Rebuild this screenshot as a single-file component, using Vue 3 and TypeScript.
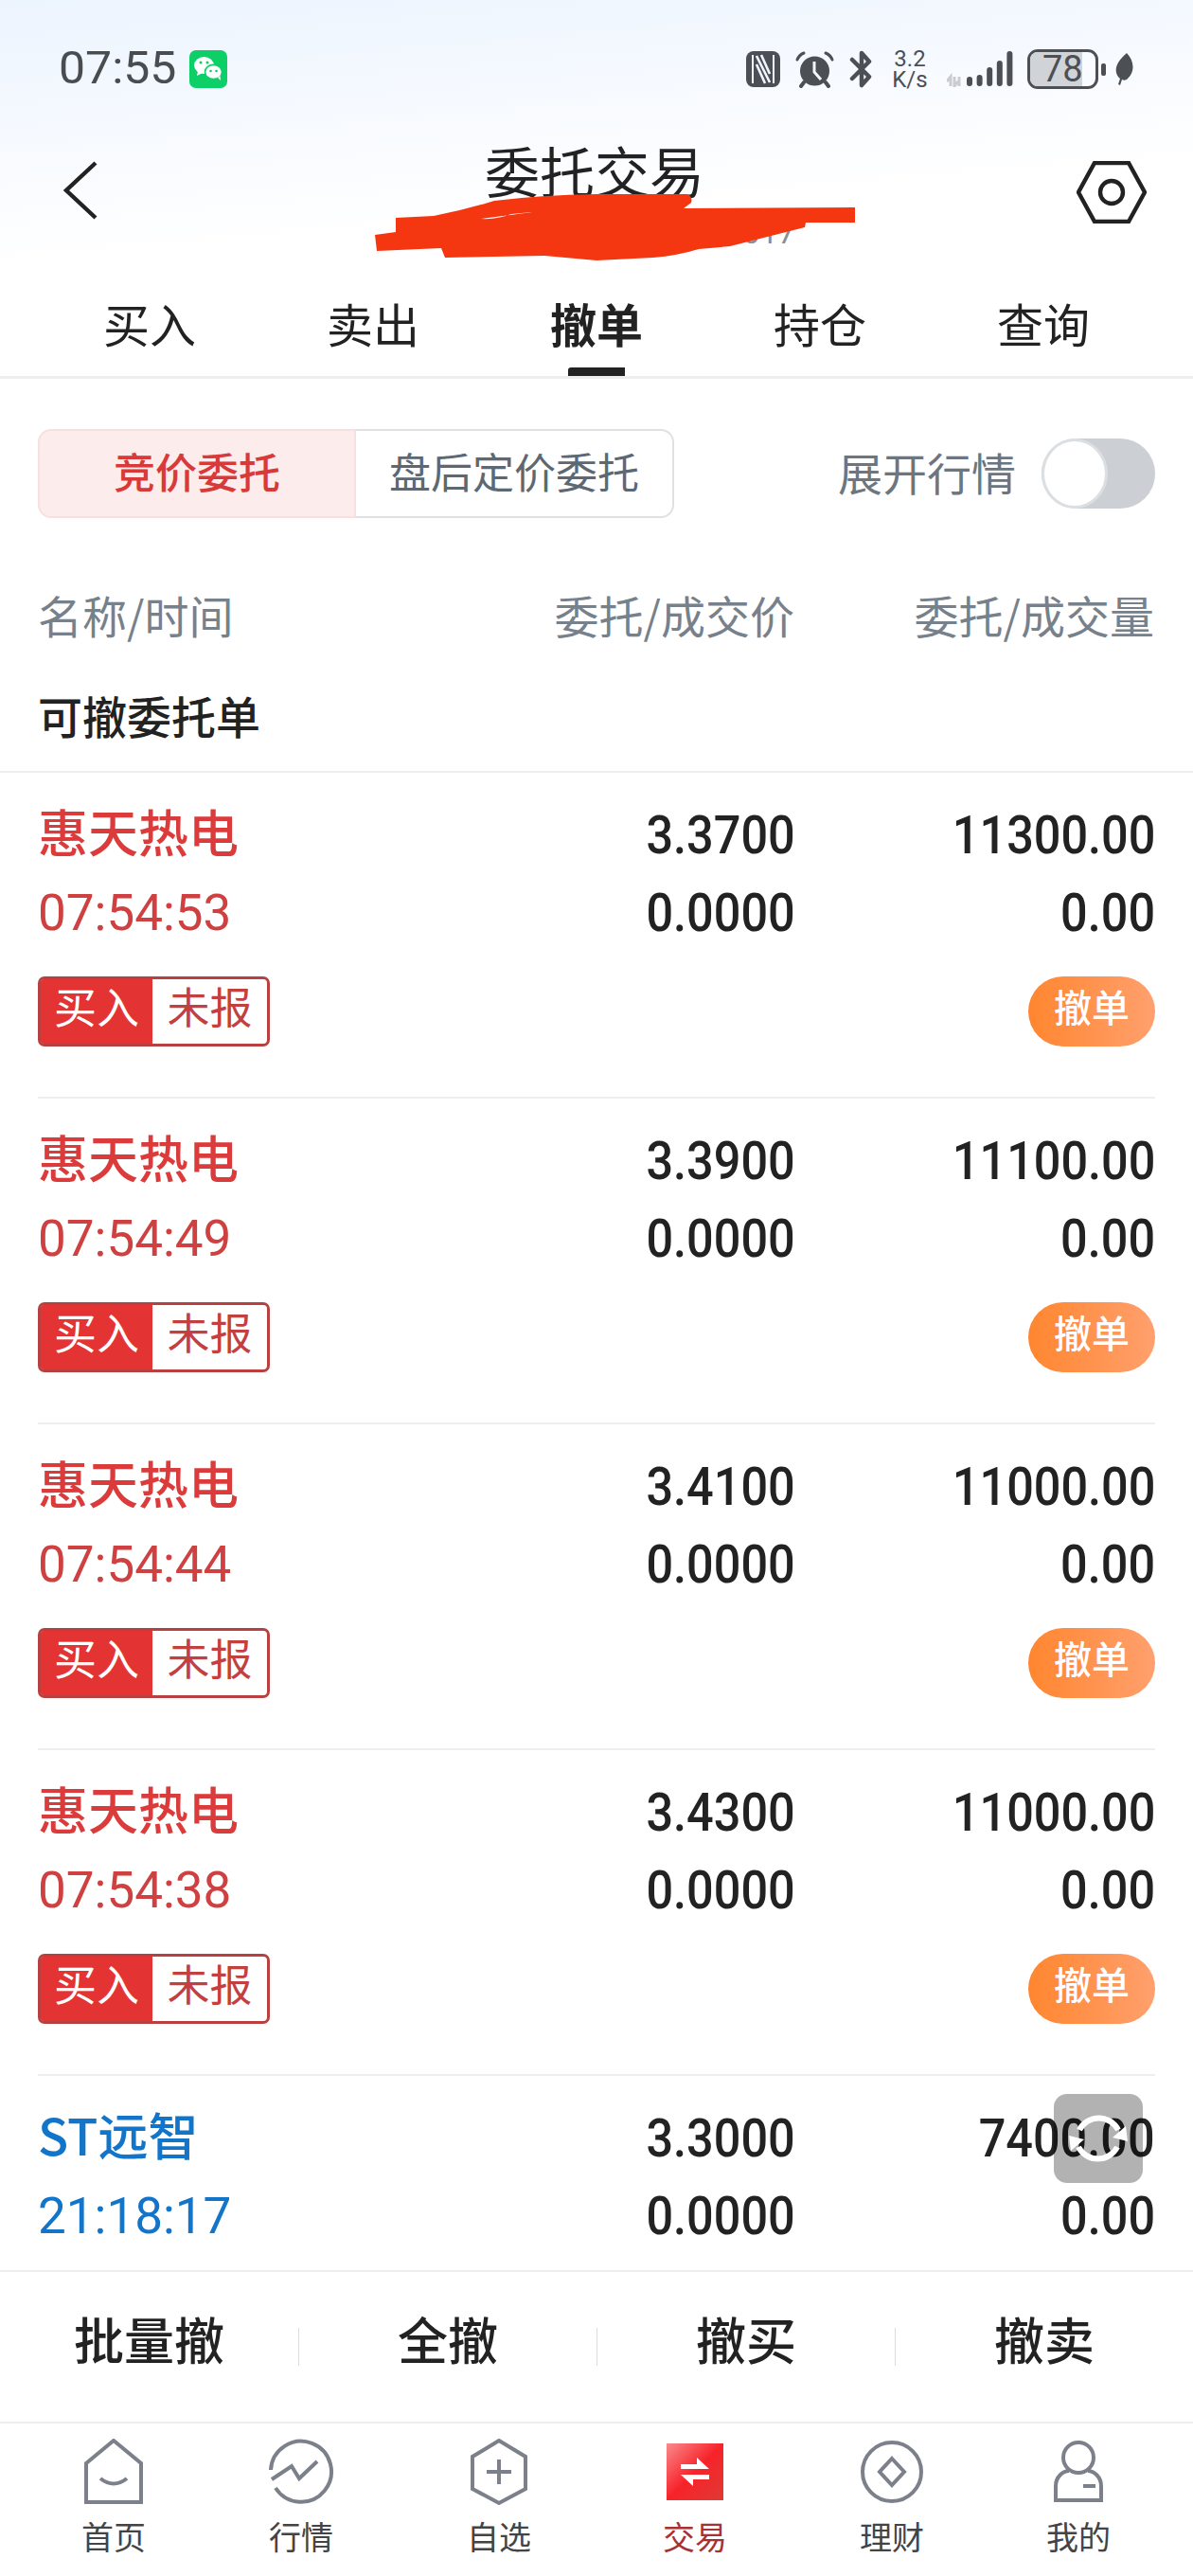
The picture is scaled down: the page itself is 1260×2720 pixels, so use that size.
<script setup lang="ts">
interface Order {
  name: string
  time: string
  price: string
  qty: string
  color: 'red' | 'blue'
  tail: boolean
}

const topTabs = ['买入', '卖出', '撤单', '持仓', '查询']
const actions = ['批量撤', '全撤', '撤买', '撤卖']

const orders: Order[] = [
  { name: '惠天热电', time: '07:54:53', price: '3.3700', qty: '11300.00', color: 'red', tail: true },
  { name: '惠天热电', time: '07:54:49', price: '3.3900', qty: '11100.00', color: 'red', tail: true },
  { name: '惠天热电', time: '07:54:44', price: '3.4100', qty: '11000.00', color: 'red', tail: true },
  { name: '惠天热电', time: '07:54:38', price: '3.4300', qty: '11000.00', color: 'red', tail: true },
  { name: 'ST远智', time: '21:18:17', price: '3.3000', qty: '7400.00', color: 'blue', tail: false },
]

const signal = [10, 12, 20, 27, 37]
</script>

<template>
  <div class="phone">
    <div class="head">
      <div class="status">
        <span class="clock">07:55</span>
        <svg class="wechat" width="40" height="40" viewBox="0 0 40 40">
          <rect width="40" height="40" rx="7" fill="#0ccf68" />
          <ellipse cx="15.5" cy="16" rx="10.5" ry="9" fill="#fff" />
          <path d="M9 22l-1 5 6-3z" fill="#fff" />
          <ellipse cx="25.5" cy="23" rx="9" ry="7.6" fill="#fff" stroke="#0ccf68" stroke-width="1.6" />
          <path d="M30 29l3 3-.5-5z" fill="#fff" />
          <circle cx="12" cy="13" r="1.5" fill="#0ccf68" />
          <circle cx="19" cy="13" r="1.5" fill="#0ccf68" />
          <circle cx="22.5" cy="22" r="1.3" fill="#0ccf68" />
          <circle cx="28.5" cy="22" r="1.3" fill="#0ccf68" />
        </svg>
        <div class="sys">
          <svg width="36" height="38" viewBox="0 0 36 38">
            <rect width="36" height="38" rx="8" fill="#4c4f53" />
            <path d="M7 4v30M29 4v30" stroke="#eef5fe" stroke-width="2" />
            <path d="M11 5l14 28M11 14l9 20M25 24l-9-20" stroke="#eef5fe" stroke-width="2.6" fill="none" />
          </svg>
          <svg width="41" height="39" viewBox="0 0 41 39">
            <circle cx="20.5" cy="21" r="15.5" fill="#4c4f53" />
            <path d="M20 11v11l7 8" stroke="#f2f7fe" stroke-width="3" fill="none" />
            <path d="M2 9q2-5 7-7M39 9q-2-5-7-7" stroke="#4c4f53" stroke-width="3" fill="none" stroke-linecap="round" />
            <path d="M9 33l-3 4M32 33l3 4" stroke="#4c4f53" stroke-width="4" stroke-linecap="round" />
          </svg>
          <svg width="24" height="40" viewBox="0 0 24 40">
            <path d="M3 10l18 18-8 9V3l8 9L3 30" fill="none" stroke="#4c4f53" stroke-width="4.5" stroke-linejoin="round" stroke-linecap="round" />
          </svg>
          <div class="speed"><span>3.2</span><span>K/s</span></div>
          <svg class="bars" width="70" height="38" viewBox="0 0 70 38">
            <path d="M4 37V27l-4 5M8 27v10l4-5M13 37V27" stroke="#c9ccd1" stroke-width="3" fill="none" />
            <rect
              v-for="(h, i) in signal"
              :key="i"
              :x="21 + i * 10.6"
              :y="37 - h"
              width="6"
              :height="h"
              rx="3"
              fill="#4c4f53"
            />
          </svg>
          <div class="battery">
            <div class="level"></div>
            <span>78</span>
          </div>
          <div class="nub"></div>
          <svg class="leaf" width="21" height="34" viewBox="0 0 21 34">
            <path d="M14 0c8 8 9 20 1 27-2 2-4 2-6 1l-2 6-2-1 2-6C0 21 1 11 14 0z" fill="#4c4f53" />
          </svg>
        </div>
      </div>

      <div class="nav">
        <svg class="back" width="36" height="62" viewBox="0 0 36 62">
          <path d="M34 2L3 31l31 29" fill="none" stroke="#222" stroke-width="4.4" />
        </svg>
        <div class="titles">
          <div class="title">委托交易</div>
          <div class="sub">017</div>
        </div>
        <svg class="gear" width="74" height="66" viewBox="0 0 74 66">
          <path d="M19 2h36l17 31-17 31H19L2 33z" fill="none" stroke="#222" stroke-width="4.4" />
          <circle cx="37" cy="33" r="12" fill="none" stroke="#222" stroke-width="4.4" />
        </svg>
      </div>

      <div class="tabs">
        <div v-for="t in topTabs" :key="t" class="tab" :class="{ on: t === '撤单' }">{{ t }}</div>
      </div>
    </div>

    <div class="controls">
      <div class="seg">
        <div class="seg-item active">竞价委托</div>
        <div class="seg-item">盘后定价委托</div>
      </div>
      <div class="expand">
        <span>展开行情</span>
        <div class="switch"><div class="knob"></div></div>
      </div>
    </div>

    <div class="cols">
      <span>名称/时间</span>
      <span class="r">委托/成交价</span>
      <span class="r">委托/成交量</span>
    </div>
    <div class="section">可撤委托单</div>

    <div class="list">
      <div v-for="(o, i) in orders" :key="i" class="row">
        <div class="grid" :class="o.color">
          <div class="name">{{ o.name }}</div>
          <div class="val r"><span class="num">{{ o.price }}</span></div>
          <div class="val r"><span class="num">{{ o.qty }}</span></div>
          <div class="time"><span class="num left">{{ o.time }}</span></div>
          <div class="val r"><span class="num">0.0000</span></div>
          <div class="val r"><span class="num">0.00</span></div>
        </div>
        <div v-if="o.tail" class="tail">
          <div class="tag"><span class="tag-a">买入</span><span class="tag-b">未报</span></div>
          <div class="cancel">撤单</div>
        </div>
      </div>
    </div>

    <div class="actions">
      <div v-for="a in actions" :key="a" class="action"><span>{{ a }}</span></div>
    </div>

    <div class="bottom">
      <div class="item">
        <svg width="66" height="70" viewBox="0 0 66 70">
          <path d="M4 26L33 2l29 24v41H4z" fill="none" stroke="#7c808a" stroke-width="4" />
          <path d="M19 42q14 11 28 0" fill="none" stroke="#7c808a" stroke-width="4" />
        </svg>
        <span>首页</span>
      </div>
      <div class="item">
        <svg width="70" height="70" viewBox="0 0 70 70">
          <path d="M3 33A32 32 0 1 1 8 52" fill="none" stroke="#7c808a" stroke-width="4" />
          <path d="M4 43l21-14 8 13 19-18" fill="none" stroke="#7c808a" stroke-width="4" />
        </svg>
        <span>行情</span>
      </div>
      <div class="item">
        <svg width="66" height="70" viewBox="0 0 66 70">
          <path d="M33 2l28 17v34L33 68 5 53V19z" fill="none" stroke="#7c808a" stroke-width="4" />
          <path d="M20 35h26M33 22v26" stroke="#7c808a" stroke-width="4" />
        </svg>
        <span>自选</span>
      </div>
      <div class="item trade">
        <svg width="66" height="70" viewBox="0 0 66 70">
          <defs>
            <linearGradient id="tradeFill" x1="0" y1="0" x2="1" y2="1">
              <stop offset="0" stop-color="#f98a8c" />
              <stop offset=".5" stop-color="#f7232a" />
              <stop offset="1" stop-color="#de3a34" />
            </linearGradient>
          </defs>
          <rect x="3" y="5" width="60" height="60" fill="url(#tradeFill)" />
          <path d="M18 32v-5h17v-7l13 12zM48 38v5H31v7L18 38z" fill="#fff" />
        </svg>
        <span>交易</span>
      </div>
      <div class="item">
        <svg width="70" height="70" viewBox="0 0 70 70">
          <circle cx="35" cy="35" r="31" fill="none" stroke="#7c808a" stroke-width="4" />
          <path d="M35 21l13 14-13 14-13-14z" fill="none" stroke="#7c808a" stroke-width="4" />
        </svg>
        <span>理财</span>
      </div>
      <div class="item">
        <svg width="66" height="70" viewBox="0 0 66 70">
          <circle cx="33" cy="20" r="16" fill="none" stroke="#7c808a" stroke-width="4" />
          <path d="M9 65V50c0-10 8-16 14-16M57 65V50c0-10-8-16-14-16M7 65h52" fill="none" stroke="#7c808a" stroke-width="4" />
          <path d="M38 50h13" stroke="#7c808a" stroke-width="4" />
        </svg>
        <span>我的</span>
      </div>
    </div>

    <!-- 手工涂抹的遮挡 -->
    <svg class="scribble" width="520" height="80" viewBox="396 200 520 80">
      <path
        fill="#f53711"
        fill-rule="evenodd"
        d="M396 248L418 245V230L458 228Q490 222 522 212Q570 206 630 205L726 205Q732 208 730 214L722 220L903 219V235H851L850 240L771 260L738 263Q715 270 690 272L630 275L575 270L470 272L466 262L398 265zM508 231L562 224L540 226Q525 232 508 231z"
      />
    </svg>

    <div class="float">
      <svg width="66" height="66" viewBox="0 0 66 66">
        <path d="M13 24A23 23 0 0 1 54 24M53 42A23 23 0 0 1 12 42" fill="none" stroke="#fff" stroke-width="6" />
        <path d="M48 32l14-12 2 16zM18 34L4 46 2 30z" fill="#fff" />
      </svg>
    </div>
  </div>
</template>

<style>
html,
body {
  margin: 0;
  background: #fff;
}
</style>

<style scoped>
.phone {
  position: relative;
  width: 1260px;
  height: 2720px;
  overflow: hidden;
  display: flex;
  flex-direction: column;
  background: #fff;
  color: #222;
  font-family: "Noto Sans CJK SC", sans-serif;
}

.head {
  background: linear-gradient(175deg, #ecf4fe 0, #f5f9ff 130px, #fff 280px);
  background-size: 100% 280px;
  background-repeat: no-repeat;
}

.status {
  height: 146px;
  display: flex;
  align-items: center;
  padding: 0 63px 0 62px;
  box-sizing: border-box;
}

.clock {
  font-family: Roboto, sans-serif;
  font-size: 49px;
  line-height: 56px;
  padding-bottom: 2px;
  color: #4a4d50;
  display: inline-block;
  width: 123px;
  transform: scaleX(1.02);
  transform-origin: left center;
}

.wechat {
  margin-left: 15px;
}

.sys {
  margin-left: auto;
  display: flex;
  align-items: center;
  gap: 16px;
}

.speed {
  display: flex;
  flex-direction: column;
  align-items: center;
  width: 40px;
  margin-left: 4px;
  font-family: Roboto, sans-serif;
  font-size: 24px;
  line-height: 22px;
  color: #4c4f53;
}

.bars {
  margin-left: 3px;
  margin-right: -1px;
}

.battery {
  position: relative;
  width: 75px;
  height: 42px;
  box-sizing: border-box;
  border: 3px solid #4c4f53;
  border-radius: 11px;
  overflow: hidden;
}

.level {
  width: 55px;
  height: 100%;
  background: #d0d3d8;
}

.battery span {
  position: absolute;
  left: 13px;
  top: 0;
  font-family: Roboto, sans-serif;
  font-size: 38px;
  line-height: 36px;
  color: #4c4f53;
}

.nub {
  width: 5px;
  height: 13px;
  border-radius: 2px;
  background: #4c4f53;
  margin-left: -13px;
}

.leaf {
  margin-left: -8px;
}

.nav {
  height: 144px;
  display: grid;
  grid-template-columns: 200px 1fr 200px;
}

.back {
  margin: 24px 0 0 67px;
}

.gear {
  margin: 24px 0 0 77px;
}

.titles {
  position: relative;
}

.title {
  font-size: 58px;
  line-height: 66px;
  text-align: center;
  margin-right: 4px;
}

.sub {
  position: absolute;
  top: 80px;
  right: 220px;
  font-family: Roboto, sans-serif;
  font-size: 33px;
  line-height: 40px;
  color: #8a8f96;
}

.tabs {
  height: 110px;
  box-sizing: border-box;
  border-bottom: 3px solid #eee;
  padding: 0 40px;
  display: grid;
  grid-template-columns: repeat(5, 236px);
}

.tab {
  position: relative;
  font-size: 49px;
  line-height: 102px;
  text-align: center;
}

.tab.on {
  font-weight: 700;
}

.tab.on::after {
  content: "";
  position: absolute;
  left: 88px;
  bottom: 0;
  width: 60px;
  height: 9px;
  background: #222;
  border-radius: 3px 0 0 0;
}

.controls {
  margin-top: 53px;
  height: 94px;
  padding: 0 40px;
  display: flex;
  justify-content: space-between;
  align-items: center;
}

.seg {
  display: flex;
  width: 672px;
  height: 94px;
}

.seg-item {
  flex: 1;
  height: 94px;
  box-sizing: border-box;
  border: 2px solid #dfe1e4;
  border-left: none;
  border-radius: 0 14px 14px 0;
  text-align: center;
  font-size: 44px;
  line-height: 84px;
  color: #5c6873;
}

.seg-item.active {
  flex: 0 0 336px;
  border: 2px solid #f7e0e0;
  border-radius: 14px 0 0 14px;
  background: #fdecec;
  color: #d83a3a;
  font-weight: 500;
}

.expand {
  display: flex;
  align-items: center;
  gap: 27px;
  font-size: 47px;
  color: #6b7680;
}

.expand span {
  margin-bottom: 6px;
}

.switch {
  width: 120px;
  height: 74px;
  border-radius: 37px;
  background: #ccd0d4;
}

.knob {
  width: 70px;
  height: 74px;
  box-sizing: border-box;
  border: 3px solid #dcdfe2;
  border-radius: 50%;
  background: #fff;
}

.cols {
  margin-top: 70px;
  height: 70px;
  padding: 0 41px 0 40px;
  display: grid;
  grid-template-columns: 1fr 300px 380px;
  font-size: 47px;
  line-height: 64px;
  color: #76818b;
}

.r {
  text-align: right;
}

.section {
  padding: 33px 40px 24px;
  font-size: 47px;
  line-height: 70px;
  font-weight: 500;
  border-bottom: 2px solid #eee;
}

.list {
  flex: 1;
  overflow: hidden;
}

.row {
  height: 344px;
  box-sizing: border-box;
  margin: 0 40px;
  padding-top: 20px;
  border-bottom: 2px solid #eee;
}

.grid {
  display: grid;
  grid-template-columns: 1fr 300px 380px;
  grid-auto-rows: 82px;
  line-height: 82px;
}

.name {
  font-size: 53px;
  font-weight: 500;
}

.time {
  font-size: 53px;
}

.red .name {
  color: #dc3b3b;
}

.red .time {
  color: #cf4040;
}

.blue .name,
.blue .time {
  color: #1275c9;
}

.val {
  font-size: 56px;
  color: #222;
}

.num {
  display: inline-block;
  font-family: Roboto, sans-serif;
  transform: scaleX(.9);
  transform-origin: right center;
}

.time .num {
  transform: none;
}

.val .num {
  font-weight: 500;
}

.tail {
  margin-top: 31px;
  display: flex;
  justify-content: space-between;
}

.tag {
  display: flex;
  width: 245px;
  height: 74px;
  box-sizing: border-box;
  border: 3px solid #b84040;
  border-radius: 7px;
  font-size: 45px;
  line-height: 56px;
}

.tag-a {
  width: 118px;
  text-align: center;
  background: #e33333;
  border-radius: 3px 0 0 3px;
  color: #fff;
}

.tag-b {
  flex: 1;
  text-align: center;
  color: #c24040;
}

.cancel {
  width: 134px;
  height: 74px;
  border-radius: 37px;
  background: linear-gradient(90deg, #ff862f, #ffa06e);
  color: #fff;
  font-size: 40px;
  font-weight: 500;
  line-height: 62px;
  text-align: center;
}

.actions {
  height: 160px;
  box-sizing: border-box;
  border-top: 2px solid #eee;
  display: grid;
  grid-template-columns: repeat(4, 315px);
  align-items: center;
}

.action {
  height: 40px;
  font-size: 53px;
  font-weight: 500;
  text-align: center;
  border-left: 1px solid #ddd;
}

.action span {
  display: block;
  line-height: 40px;
  margin-top: -9px;
}

.action:first-child {
  border-left: none;
}

.bottom {
  height: 163px;
  box-sizing: border-box;
  border-top: 2px solid #eee;
  display: grid;
  grid-template-columns: 240px 156px 262px 152px 264px 130px;
  padding-top: 16px;
}

.item {
  display: flex;
  flex-direction: column;
  align-items: center;
  font-size: 34px;
  line-height: 44px;
  color: #444;
}

.item span {
  margin-top: 11px;
}

.trade {
  color: #a83232;
}

.scribble {
  position: absolute;
  left: 396px;
  top: 200px;
}

.float {
  position: absolute;
  left: 1113px;
  top: 2211px;
  width: 94px;
  height: 94px;
  border-radius: 14px;
  background: rgba(0, 0, 0, .3);
  display: flex;
  align-items: center;
  justify-content: center;
}
</style>
